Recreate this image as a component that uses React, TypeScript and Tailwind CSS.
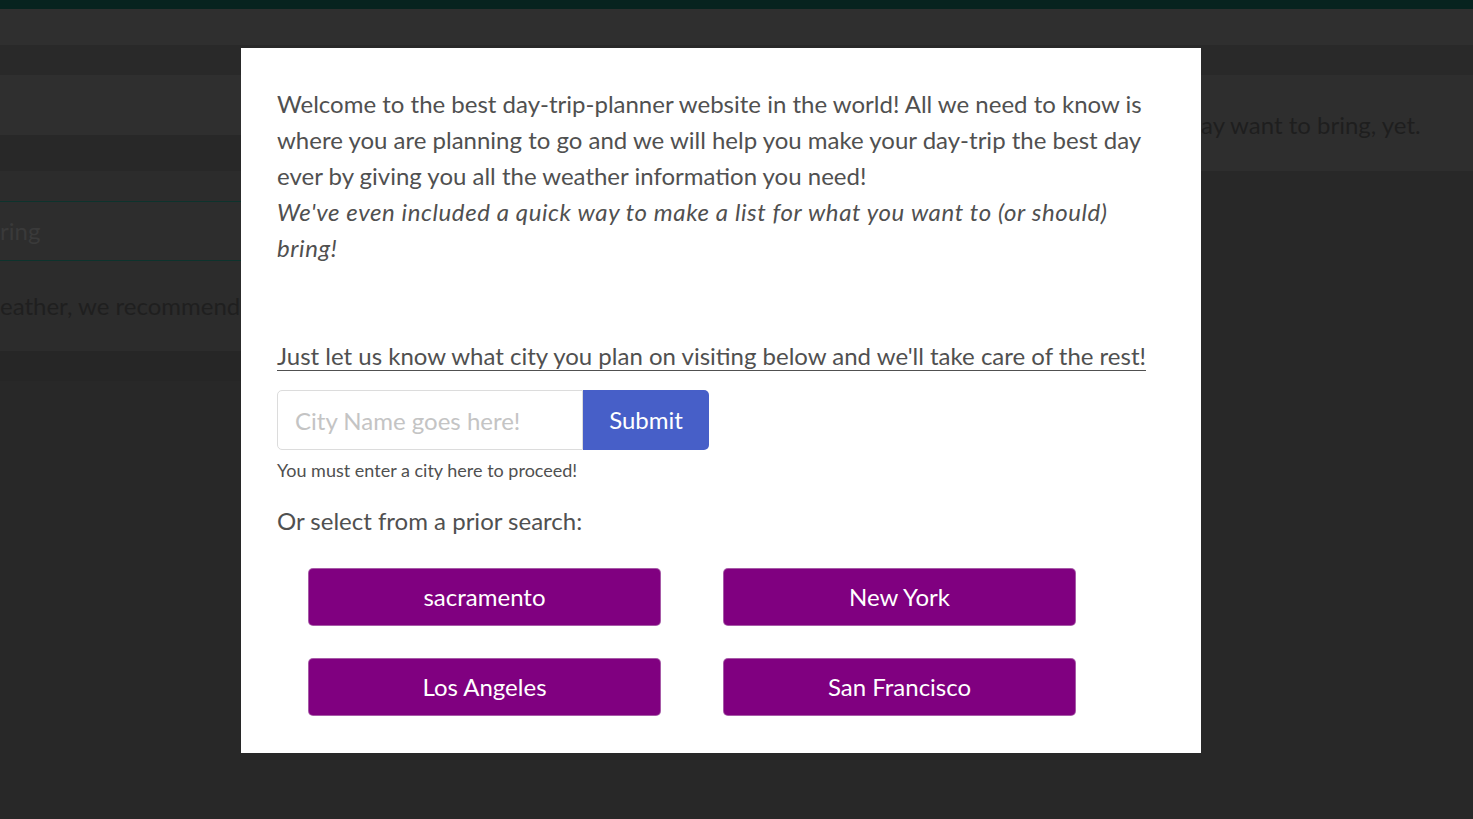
import React from 'react';

const cities = ['sacramento', 'New York', 'Los Angeles', 'San Francisco'];

export default function App() {
  return (
    <div className="relative w-full h-[819px] overflow-hidden bg-[#282828] font-['Lato',_'Liberation_Sans',_sans-serif]">
      {/* page behind the modal, already dimmed */}
      <div className="h-[9px] bg-[#07231f]" />
      <div className="h-[36px] bg-[#2f2f2f]" />
      <div className="h-[30px] bg-[#292929]" />
      <div className="flex">
        <div className="w-[241px]">
          <div className="h-[60px] bg-[#2f2f2f]" />
          <div className="h-[36px] bg-[#282828]" />
          <div className="bg-[#2c2c2c] pt-[30px]">
            <div className="h-[60px] border-y border-[#0d332d] bg-[#2d2d2d] flex items-center text-[24px] text-[#3a3a3a]">
              <span>ring</span>
            </div>
            <div className="h-[90px] flex items-center text-[24px] text-[#1f1f1f] whitespace-nowrap">
              eather, we recommend
            </div>
          </div>
          <div className="h-[30px] bg-[#262626]" />
        </div>
        <div className="w-[960px]" />
        <div className="flex-1 h-[96px] bg-[#2e2e2e] flex items-center pt-[4px] text-[24px] text-[#1e1e1e] whitespace-nowrap">
          ay want to bring, yet.
        </div>
      </div>

      {/* modal */}
      <div className="absolute left-[241px] top-[48px] w-[960px] bg-white px-[36px] pt-[38px] pb-[37px] text-[#505050]">
        <p className="text-[24px] leading-[36px]">
          Welcome to the best day-trip-planner website in the world! All we need to know is where you are planning to go and we will help you make your day-trip the best day ever by giving you all the weather information you need!
          <br />
          <em className="tracking-[0.6px]">We've even included a quick way to make a list for what you want to (or should) bring!</em>
        </p>
        <p className="mt-[72px] text-[24px] leading-[36px] underline underline-offset-[5px] decoration-1">
          Just let us know what city you plan on visiting below and we'll take care of the rest!
        </p>
        <div className="mt-[16px] flex">
          <input
            type="text"
            placeholder="City Name goes here!"
            className="w-[306px] h-[60px] border border-[#dcdcdc] rounded-l-[5px] px-[17px] text-[24px] text-[#505050] placeholder:text-[#c4c4c4] outline-none"
          />
          <button className="w-[126px] h-[60px] bg-[#475fc8] text-white text-[24px] rounded-r-[5px]">
            Submit
          </button>
        </div>
        <p className="mt-[7px] text-[18px] leading-[27px]">You must enter a city here to proceed!</p>
        <p className="mt-[19px] text-[24px] leading-[36px]">Or select from a prior search:</p>
        <div className="mt-[29px] pl-[31px] grid grid-cols-[353px_353px] gap-x-[62px] gap-y-[32px]">
          {cities.map((c) => (
            <button key={c} className="h-[58px] rounded-[5px] bg-[#800080] text-white text-[24px] border border-[#e0e0e0]/40">
              {c}
            </button>
          ))}
        </div>
      </div>
    </div>
  );
}
